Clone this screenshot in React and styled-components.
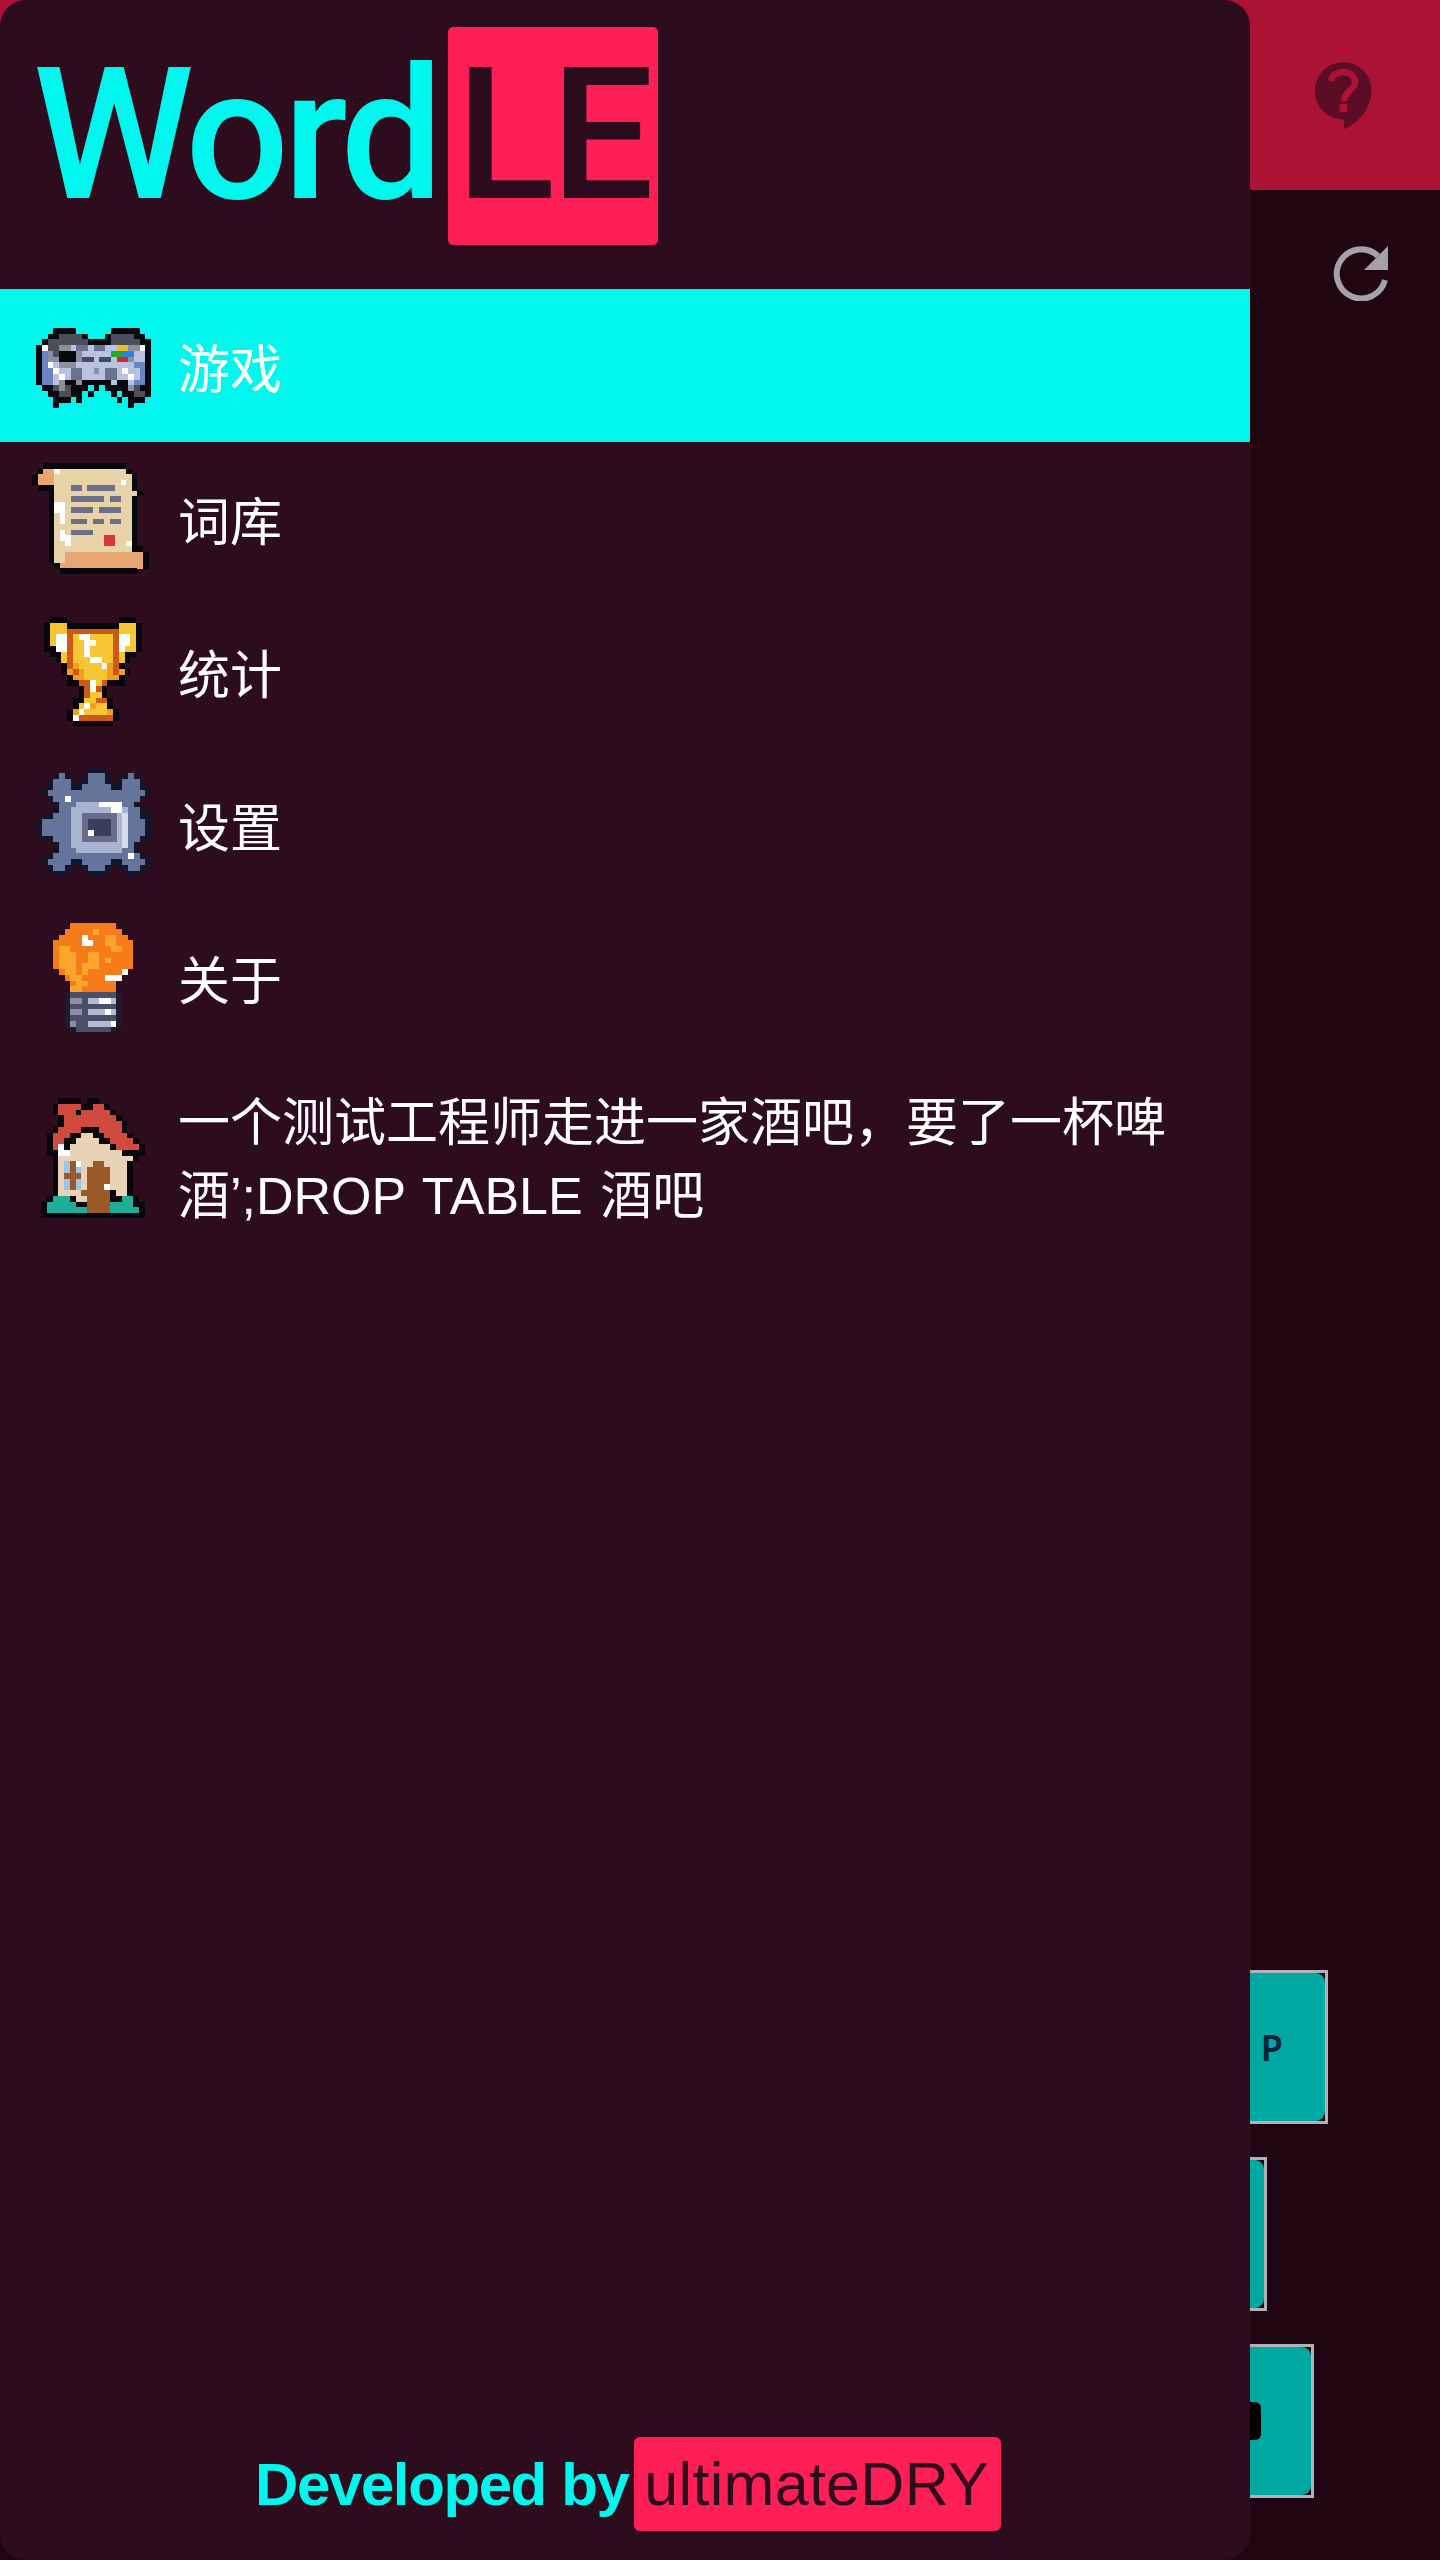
import React from 'react';
import styled, { createGlobalStyle } from 'styled-components';

const GlobalStyle = createGlobalStyle`
  html, body {
    margin: 0;
    padding: 0;
    background: #1f0610;
  }
  * {
    box-sizing: border-box;
  }
`;

const Page = styled.div`
  position: relative;
  display: flex;
  flex-direction: column;
  width: 1440px;
  height: 2560px;
  overflow: hidden;
  background: #1f0610;
  font-family: "Liberation Sans", "Noto Sans CJK SC", sans-serif;
`;

const TopBar = styled.header`
  display: flex;
  justify-content: flex-end;
  align-items: flex-start;
  height: 190px;
  padding: 62px 68px 0 0;
  background: #ab1236;
`;

const Toolbar = styled.div`
  display: flex;
  justify-content: flex-end;
  padding: 55px 50px 0 0;
`;

const Board = styled.div`
  display: flex;
  flex-direction: column;
  gap: 33px;
  margin-top: auto;
  padding: 0 0 62px 1100px;
`;

const TileFrame = styled.div`
  width: ${(props) => props.$width}px;
  height: 154px;
  border: 3px solid #b2b0b8;
`;

const TileFace = styled.div`
  display: flex;
  align-items: center;
  justify-content: ${(props) => (props.$keycap ? 'flex-start' : 'flex-end')};
  height: 100%;
  padding-right: ${(props) => props.$pad || 0}px;
  padding-left: ${(props) => (props.$keycap ? 60 : 0)}px;
  border-radius: 9px;
  background: #00a8a2;
  color: #0c2438;
  font-family: "Noto Sans", sans-serif;
  font-size: 36px;
  font-weight: 600;
`;

const Keycap = styled.div`
  width: 98px;
  height: 38px;
  border-radius: 6px;
  background: #000;
`;

const Drawer = styled.aside`
  position: absolute;
  top: 0;
  left: 0;
  display: flex;
  flex-direction: column;
  width: 1250px;
  height: 2560px;
  border-radius: 26px;
  background: #2d0c1d;
`;

const Logo = styled.div`
  display: flex;
  align-items: center;
  height: 289px;
  padding: 0 0 18px 33px;
  font-family: Roboto, "Liberation Sans", sans-serif;
  font-size: 183px;
  font-weight: 500;
  line-height: 218px;
`;

const LogoWord = styled.span`
  width: 415px;
  color: #00f7ee;
  letter-spacing: -6px;
`;

const LogoBadge = styled.span`
  display: block;
  width: 210px;
  height: 218px;
  padding-left: 8px;
  border-radius: 5px;
  background: #ff1f57;
  color: #2d0c1d;
  letter-spacing: -4px;
`;

const Menu = styled.nav`
  display: flex;
  flex-direction: column;
`;

const MenuRow = styled.div`
  display: flex;
  align-items: center;
  gap: 24px;
  min-height: 153px;
  padding: 0 48px 0 32px;
  background: ${(props) => (props.$active ? '#00f7ee' : 'transparent')};
`;

const IconSlot = styled.div`
  display: flex;
  justify-content: center;
  flex: none;
  width: 122px;
`;

const MenuLabel = styled.span`
  padding: ${(props) => (props.$multiline ? '33px 0 29px' : '10px 0 0')};
  color: #fff;
  font-size: 52px;
  line-height: 73px;
  word-spacing: 3px;
`;

const Footer = styled.footer`
  display: flex;
  align-items: center;
  justify-content: center;
  gap: 6px;
  margin-top: auto;
  padding: 0 0 29px 6px;
  font-size: 60px;
`;

const FooterName = styled.span`
  color: #00f7ee;
  font-weight: 700;
  letter-spacing: -1.4px;
`;

const FooterBadge = styled.span`
  padding: 5px 12px 5px 10px;
  border-radius: 6px;
  background: #ff1f57;
  color: #2d0c1d;
  font-size: 61px;
  line-height: 84px;
  letter-spacing: 0.3px;
`;

const PixelSvg = styled.svg`
  display: block;
`;

const controller = {
  palette: { k: '#07090f', d: '#4c4e5c', g: '#8d8f9c', l: '#b9c2de', b: '#6a84c2', w: '#fff', s: '#68748f', e: '#454c62', y: '#e8c21c', G: '#22a82a', B: '#2a84e0', r: '#d8262a' },
  rows: [
    '....................',
    '...kkkk......kkkkk..',
    '..kkddddk...kddddkk.',
    '.kdddddddkkkkdddddkk',
    'kwddgglsslssllyyggwk',
    'kbgdkkkglllllGGBBllk',
    'kbggkkkgeeleelrrgllk',
    'kbwlgggllllllllllbbk',
    'kbbwllssllglsslwllbk',
    'kbblwlssllllssllwlbk',
    'kbblgkkgkkkkklkklbbk',
    '.kkdgdkkk.k.kkkkgdkk',
    '..kkddkk.k...k.kkddk',
    '...kkk.k......k.kkk.',
    '...k............k...',
  ],
};

const scroll = {
  palette: { k: '#07070c', o: '#e8a672', t: '#e8d2a8', s: '#6b6f88', r: '#dc3440', w: '#fff' },
  rows: [
    '..kkkkkkkkkkkkkkk....',
    '.koowttttttttttttk...',
    'kooottttttttttttttk..',
    'kooottttttttttttwtk..',
    '.kkktttsstssssstttk..',
    '...ktttttttttttttttk.',
    '...ktttsssssstssttk..',
    '...kwwttttttttttttk..',
    '...kwwtsssstssssttk..',
    '...ktwttttttttttttk..',
    '...ktwtssstsstssttk..',
    '...kttttttttttttttk..',
    '...ktwtsssstttttttk..',
    '...ktwwttttttrrtttk..',
    '...kttwttttttrrttwk..',
    '...kttttttttttttttkk.',
    '...kttooooooooooooook',
    '...kttooooooooooooook',
    '....koooooooooooooook.',
    '.....kkkkkkkkkkkkkk..',
  ],
};

const trophy = {
  palette: { k: '#07070c', y: '#f6c733', o: '#cc5a14', O: '#f0a01e', w: '#fff' },
  rows: [
    '.kkk.........kkk.',
    'kyyykkkkkkkkkyyyk',
    'kyyyoooooooooyyyk',
    'kywwoywwyyyyowwyk',
    'kywwoyywwyyyowwyk',
    'kkwwoyywyyyyowyyk',
    '.kkyoyywyyyyoykk.',
    '..kyoyyywwyyoyk..',
    '...koOyyyywOok...',
    '...kOoOyyyyOoOk..',
    '....kOOyyyyOOk...',
    '....kkoowyokkk...',
    '......kowok......',
    '......koyyk......',
    '.....kkyyook.....',
    '.....kywOyyk.....',
    '....kOwyyyyOk....',
    '....kwooooook....',
    '.....kkkkkkk.....',
  ],
};

const gear = {
  palette: { n: '#15152a', m: '#64749a', c: '#a8b4d2', v: '#d6dcec', x: '#666e8c', z: '#383e5c', w: '#fff' },
  rows: [
    '.........nnn........',
    '...nmn..nmmmn..nmn..',
    '..nmmmn.nmmmn.nmmmn.',
    '..nmmmnnmmmmmnnmmmn.',
    '.nmmmmmmmmmmmmmmmmmn',
    '..nmmwmmmmmmmmmmmmn.',
    '...nmmmccccwwwwmmn..',
    '...nmmcccccccwwcmmn.',
    '.nnmmmccxxxxxxcvmmnn',
    'nmmmmmccxzzzzxcvmmmn',
    'nmmmmmccxzzzzxcvmmmn',
    'nmmmmmccxwzzzxcvmmmn',
    '.nnmmmccxxxxxxcvmmnn',
    '...nmmcccccccccvmn..',
    '...nmmmccccccccmmn..',
    '..nmmmmmmmmmmmmmwmn.',
    '.nmmmmnnmmmmmnnmmmmn',
    '..nmmn..nmmmn..nmmn.',
    '...nn....nnn....nn..',
    '....................',
  ],
};

const bulb = {
  palette: { o: '#f67c1a', O: '#fba52a', w: '#fff', n: '#1d1b30', a: '#4a4e68', b: '#b2bad2', g: '#8a8ea8' },
  rows: [
    '...oooooooo...',
    '..oooooOoooo..',
    '.oooowoooOOoo.',
    'ooooowwooOOooo',
    'oOOoooooooOOoo',
    'oOOOooOOoooooo',
    'oOOOooOOoOoooo',
    'oOOOoOOOoooooo',
    '.oOOoOoooooow.',
    '..oOOoooowww..',
    '...oOOooooo...',
    '...OOoooooo...',
    '..naaaaaaaan..',
    '..nggabbwwbn..',
    '..naaaaaaaan..',
    '..nggabbbwbn..',
    '..naaaaaaaan..',
    '..ngaabbbbwn..',
    '...naaaaaan...',
  ],
};

const house = {
  palette: { k: '#07070c', r: '#d04a40', c: '#e8d4b4', b: '#9a5a28', s: '#9cc4ea', T: '#1fae9a', w: '#fff' },
  rows: [
    '...kkkk.kk........',
    '..krrrrkkrrk......',
    '..krrrkrrrrrk.....',
    '...krrrrrrrrrk....',
    '...krrrrrrrrrrk...',
    '..krrrrkkkrrrrk...',
    '.krrrkkcckkrrrrk..',
    '.krrkkcccckkrrrrk.',
    '.krwkccccccckrrrrk',
    '.kkwwccccccccckkkk',
    '..kccccccccccccck.',
    '..kcsbwccbbcccck..',
    '..kcsbscbbbbccck..',
    '..kcbbbcbbbbccck..',
    '..kcsbscbbbbccck..',
    '..kcsbscbbbwccck..',
    '..kccccbbbbbkcck..',
    '.kTTTkccbbbbkkTTk.',
    'kTTTTTkkbbbbTTTTkk',
    'kTTTTTTTbbbbTTTTTk',
    'kkkkkkkkkkkkkkkkkk',
  ],
};

const CELL = 5.75;

const PixelIcon = ({ art }) => {
  const cols = Math.max(...art.rows.map((row) => row.length));
  return (
    <PixelSvg
      width={cols * CELL}
      height={art.rows.length * CELL}
      viewBox={`0 0 ${cols} ${art.rows.length}`}
      shapeRendering="crispEdges"
    >
      {art.rows.map((row, y) =>
        row.split('').map((ch, x) =>
          art.palette[ch] ? <rect key={`${x}-${y}`} x={x} y={y} width="1.02" height="1.02" fill={art.palette[ch]} /> : null
        )
      )}
    </PixelSvg>
  );
};

const HelpIcon = () => (
  <svg width="58" height="68" viewBox="0 0 58 68">
    <path d="M29 0a28.5 28.5 0 0 1 28.5 28.5C57.5 46 44 62 30 67V57.5A28.5 28.5 0 0 1 29 0Z" fill="#5c0c24" />
    <path d="M17 19c1-6 6-9 12-9 7 0 12 4 12 10 0 8-11 9-11 19" fill="none" stroke="#ab1236" strokeWidth="6.5" />
    <rect x="25.5" y="42" width="7.5" height="8" fill="#ab1236" />
  </svg>
);

const RefreshIcon = () => (
  <svg width="58" height="56" viewBox="0 0 58 56">
    <path d="M46 11A24.5 24.5 0 1 0 53 35" fill="none" stroke="#a5a1a8" strokeWidth="6" />
    <path d="M56 1V25H32Z" fill="#a5a1a8" />
  </svg>
);

const menuItems = [
  { label: '游戏', art: controller, active: true },
  { label: '词库', art: scroll },
  { label: '统计', art: trophy },
  { label: '设置', art: gear },
  { label: '关于', art: bulb },
  { label: '一个测试工程师走进一家酒吧，要了一杯啤酒’;DROP TABLE 酒吧', art: house, multiline: true },
];

const App = () => {
  return (
    <Page>
      <GlobalStyle />
      <TopBar>
        <HelpIcon />
      </TopBar>
      <Toolbar>
        <RefreshIcon />
      </Toolbar>
      <Board>
        <TileFrame $width={228}>
          <TileFace $pad={42}>P</TileFace>
        </TileFrame>
        <TileFrame $width={167}>
          <TileFace />
        </TileFrame>
        <TileFrame $width={214}>
          <TileFace $keycap>
            <Keycap />
          </TileFace>
        </TileFrame>
      </Board>
      <Drawer>
        <Logo>
          <LogoWord>Word</LogoWord>
          <LogoBadge>LE</LogoBadge>
        </Logo>
        <Menu>
          {menuItems.map((item) => (
            <MenuRow key={item.label} $active={item.active}>
              <IconSlot>
                <PixelIcon art={item.art} />
              </IconSlot>
              <MenuLabel $multiline={item.multiline}>{item.label}</MenuLabel>
            </MenuRow>
          ))}
        </Menu>
        <Footer>
          <FooterName>Developed by</FooterName>
          <FooterBadge>ultimateDRY</FooterBadge>
        </Footer>
      </Drawer>
    </Page>
  );
};

export default App;
